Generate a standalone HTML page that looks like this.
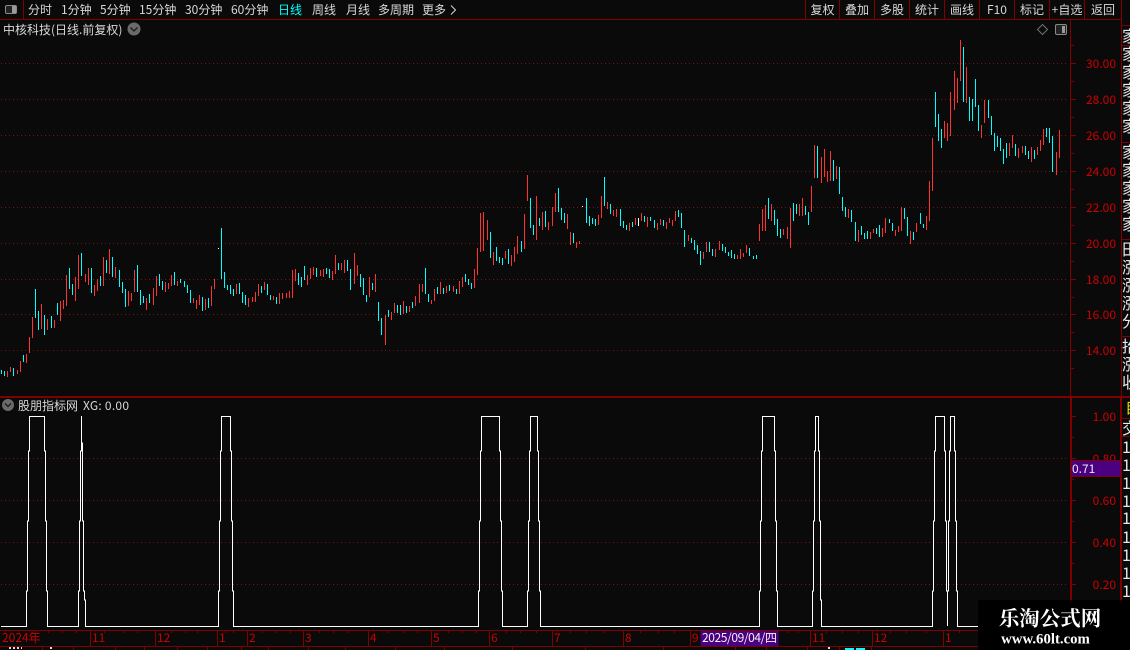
<!DOCTYPE html>
<html><head><meta charset="utf-8"><style>
html,body{margin:0;padding:0;background:#0a0a0a;width:1130px;height:650px;overflow:hidden}
svg{display:block;position:absolute;left:0;top:0}
text{font-family:"WenQuanYi Zen Hei","Noto Sans CJK SC",sans-serif;font-size:12px;fill:#d8d8d8}
.a{fill:#cc0000;text-anchor:end}
.t{fill:#cc0000}
.b{text-anchor:middle}
.s{fill:#e8e8e8;font-size:16px}
.w{font-family:"Liberation Serif","Noto Serif CJK SC",serif;font-weight:bold;fill:#fff}
</style></head><body>
<svg width="1130" height="650" viewBox="0 0 1130 650">
<rect width="1130" height="650" fill="#0a0a0a"/>
<!-- grids -->
<g stroke="#801010" stroke-width="1" stroke-dasharray="1 3" shape-rendering="crispEdges" fill="none">
<path d="M1 63.5H1069M1 99.5H1069M1 135.5H1069M1 171.5H1069M1 207.5H1069M1 243.5H1069M1 279.5H1069M1 314.5H1069M1 350.5H1069M1 458.5H1069M1 500.5H1069M1 542.5H1069M1 584.5H1069"/>
</g>
<!-- candles -->
<g fill="none" stroke-width="3" shape-rendering="crispEdges">
<g transform="translate(0,220) scale(.33333)">
<path stroke="#00ffff" d="M4 450V462M13 453V468M40 444V468M70 405V426M106 207V294M115 273V330M133 285V345M154 288V324M172 249V285M208 144V207M217 192V225M244 99V168M274 144V219M301 168V198M319 120V159M337 111V171M358 150V201M367 186V219M376 207V261M412 135V216M421 210V255M430 228V249M448 222V249M478 162V198M487 183V210M523 156V195M541 177V189M553 183V201M562 195V219M571 210V249M607 231V273M625 234V264M664 24V177M673 156V204M682 195V210M691 195V222M700 207V228M718 189V222"/>
<path stroke="#ff3232" d="M22 453V471M31 441V456M52 450V462M61 423V456M79 402V429M88 351V399M97 291V354M124 252V327M142 297V330M163 300V324M181 243V303M190 240V267M199 165V258M226 171V243M235 105V207M256 162V186M265 144V195M283 195V228M292 177V213M310 111V198M328 87V162M346 141V174M385 213V258M394 219V243M403 150V216M439 234V270M460 204V255M469 168V228M496 186V216M505 189V207M514 165V198M532 183V198M580 234V249M589 240V267M598 225V255M616 237V270M634 198V258M643 177V207M709 192V222"/>
<path stroke="#ffffff" d="M655 84V87"/>
</g>
<g transform="translate(240,200) scale(.33333)">
<path stroke="#00ffff" d="M7 276V309M16 285V315M64 258V279M82 252V285M91 285V300M109 291V312M175 219V255M184 231V261M193 198V240M229 204V231M259 204V222M268 207V234M295 189V210M322 180V213M331 207V270M361 222V261M370 234V285M379 285V306M397 249V270M415 306V363M424 354V405M445 330V351M472 315V339M481 315V345M499 318V339M517 306V324M556 204V282M565 282V306M592 261V282M610 264V282M628 255V273M649 267V282M676 222V246M685 237V255M694 249V267"/>
<path stroke="#ff3232" d="M25 294V321M37 291V306M46 276V306M55 252V288M73 246V270M100 288V300M118 279V312M127 279V297M139 279V294M148 273V294M157 210V294M166 207V243M202 225V255M211 204V237M220 201V225M241 210V228M250 207V231M277 213V240M286 165V222M304 189V210M313 180V219M343 159V252M352 195V228M388 231V291M406 222V276M436 345V435M454 336V360M463 309V339M490 303V342M508 318V336M526 288V318M538 252V309M547 252V276M574 300V312M583 267V303M601 246V282M619 258V279M640 258V276M658 243V282M667 231V261M703 207V264M712 144V225"/>
</g>
<g transform="translate(470,160) scale(.33333)">
<path stroke="#00ffff" d="M61 216V294M79 261V303M88 291V309M97 294V315M115 267V312M154 243V276M181 114V204M190 195V225M208 174V198M226 153V201M265 84V156M274 144V180M283 159V189M310 219V249M349 114V189M358 168V198M367 174V192M376 177V198M403 51V138M421 132V162M451 147V198M460 183V204M469 195V210M487 186V201M523 168V186M541 171V183M553 180V204M580 180V198M625 150V171M634 159V204M643 210V261M664 234V249M673 240V270M682 255V282M691 273V315M718 246V276M727 267V288M757 252V273M766 261V279M775 276V288M784 270V294M793 282V297M838 264V288M850 288V297M859 285V297"/>
<path stroke="#ff3232" d="M31 159V276M40 156V273M52 180V240M70 276V315M106 273V297M124 285V318M133 261V306M142 228V282M163 162V267M172 45V123M199 108V240M217 156V210M235 186V210M247 141V198M256 99V156M292 162V207M301 216V255M319 246V264M328 243V252M385 165V195M394 108V174M412 126V147M430 150V168M439 147V171M478 189V213M496 174V195M514 159V183M532 171V201M562 189V210M571 177V195M589 186V207M598 174V189M607 180V198M616 153V183M655 225V243M700 276V297M709 246V276M736 267V291M748 243V270M802 285V297M811 267V297M820 279V291M829 255V279M868 192V243M877 147V213"/>
<path stroke="#ffffff" d="M337 138V141M505 174V198"/>
</g>
<g transform="translate(760,30) scale(.33333)">
<path stroke="#00ffff" d="M25 504V567M43 540V585M52 567V618M61 597V624M100 519V573M109 522V552M136 528V555M145 546V585M172 348V444M220 390V453M238 411V492M247 501V543M256 531V561M274 540V576M286 576V633M304 588V615M313 609V627M322 603V627M349 594V612M358 585V621M388 567V579M397 579V603M433 534V567M442 561V618M460 606V630M481 549V582M490 582V594M526 186V291M535 252V333M544 297V354M610 51V216M628 201V273M637 207V273M646 147V231M655 225V303M685 210V264M694 258V315M703 309V363M712 318V351M721 324V363M730 357V402M739 339V384M766 342V378M796 348V375M805 363V387M823 360V387M859 294V321M868 294V339M877 318V426"/>
<path stroke="#ff3232" d="M7 537V603M16 525V603M34 522V573M70 597V615M82 591V627M91 534V654M118 522V558M127 504V558M154 468V546M163 345V444M184 381V459M193 357V441M202 423V456M211 363V453M229 408V447M265 537V564M295 600V636M331 606V627M340 597V609M367 594V621M376 564V609M406 600V618M415 588V606M424 531V603M451 603V642M469 579V606M499 558V600M508 453V573M517 324V483M553 273V324M562 279V333M571 186V318M583 123V240M592 144V219M601 30V153M619 111V219M664 285V324M673 210V279M748 339V378M757 315V354M775 354V384M787 348V369M814 351V396M832 351V375M841 330V363M850 297V345M889 366V435M898 300V384"/>
</g>
</g>
<!-- indicator line -->
<path fill="none" stroke="#fff" stroke-width="1" shape-rendering="crispEdges" d="M1 626.5H26.5V591H27.5V521H28.5V451H29.5V416.5H44.5V451H45.5V521H46.5V591H47.5V626.5H78.5V591H79.5V521H80.5V451H81.5V416V443H82.5V521H83.5V591H84.5V600H85.5V626.5H218.5V591H219.5V521H220.5V451H221.5V416.5H230.5V451H231.5V521H232.5V591H233.5V626.5H478.5V591H479.5V521H480.5V451H481.5V416.5H499.5V451H500.5V521H501.5V591H502.5V626.5H527.5V591H528.5V521H529.5V451H530.5V416.5H537.5V451H538.5V521H539.5V591H540.5V626.5H759.5V591H760.5V521H761.5V451H762.5V416.5H774.5V451H775.5V521H776.5V591H777.5V626.5H812.5V591H813.5V521H814.5V451H815.5V416.5H818.5V451H819.5V521H820.5V600H821.5V626.5H932.5V591H933.5V521H934.5V451H935.5V416.5H944.5V451H945.5V521H946.5V591H947.5V626V591H948.5V521H949.5V451H950.5V416.5H954.5V451H955.5V521H956.5V591H957.5V626.5H1000"/>
<!-- frame lines -->
<g stroke="#800000" stroke-width="1" fill="none" shape-rendering="crispEdges">
<path d="M0 19.5H1122M1122 25.5H1130M1122 45.5H1130M1122 142.5H1130M1122 239.5H1130M1122 336.5H1130M1122 418.5H1130M1122 436.5H1130"/>
<path d="M1070.5 20V630M1121.5 0V646M1071.5 398V630M1120.5 398V630"/>
<path d="M0 396.5H1130M0 397.5H1130"/>
<path d="M23.5 0V19M805.5 0V19M839.5 0V19M874.5 0V19M909.5 0V19M944.5 0V19M979.5 0V19M1014.5 0V19M1049.5 0V19M1084.5 0V19"/>
<!-- price ticks -->
<path d="M1071 63.5H1076M1071 99.5H1076M1071 135.5H1076M1071 171.5H1076M1071 207.5H1076M1071 243.5H1076M1071 279.5H1076M1071 314.5H1076M1071 350.5H1076M1071 45.5H1074M1071 81.5H1074M1071 117.5H1074M1071 153.5H1074M1071 189.5H1074M1071 225.5H1074M1071 261.5H1074M1071 297.5H1074M1071 332.5H1074M1071 368.5H1074"/>
<path d="M1071 416.5H1076M1071 458.5H1076M1071 500.5H1076M1071 542.5H1076M1071 584.5H1076M1071 437.5H1074M1071 479.5H1074M1071 521.5H1074M1071 563.5H1074M1071 605.5H1074"/>
<!-- time axis -->
<path d="M0 630.5H1122M0 646.5H1130"/>
<path d="M90.5 631V646M155.5 631V646M217.5 631V646M247.5 631V646M303.5 631V646M368.5 631V646M431.5 631V646M489.5 631V646M552.5 631V646M623.5 631V646M690.5 631V646M810.5 631V646M872.5 631V646M943.5 631V646"/>
<path d="M48.5 631V633M62.5 631V633M76.5 631V633M104.5 631V633M123.5 631V633M137.5 631V633M171.5 631V633M185.5 631V633M197.5 631V633M225.5 631V633M233.5 631V633M262.5 631V633M276.5 631V633M290.5 631V633M319.5 631V633M333.5 631V633M348.5 631V633M387.5 631V633M403.5 631V633M417.5 631V633M448.5 631V633M462.5 631V633M476.5 631V633M506.5 631V633M520.5 631V633M536.5 631V633M570.5 631V633M586.5 631V633M604.5 631V633M640.5 631V633M658.5 631V633M674.5 631V633M788.5 631V633M798.5 631V633M826.5 631V633M842.5 631V633M858.5 631V633M890.5 631V633M906.5 631V633M926.5 631V633M959.5 631V633"/>
<path d="M42.5 647V650M73.5 647V650M115.5 647V650M144.5 647V650M177.5 647V650M207.5 647V650M241.5 647V650M268.5 647V650M308.5 647V650M345.5 647V650M395.5 647V650M444.5 647V650M512.5 647V650M585.5 647V650M663.5 647V650M735.5 647V650M766.5 647V650M807.5 647V650M839.5 647V650M871.5 647V650"/>
</g>
<path d="M9 648H22M50 648H52M828 648H830" stroke="#ddd" stroke-width="2" stroke-dasharray="2 2" shape-rendering="crispEdges"/>
<path d="M845 649H866" stroke="#00ffff" stroke-width="2" stroke-dasharray="9 2" shape-rendering="crispEdges"/>
<!-- top left icon -->
<rect x="5.5" y="5.5" width="11" height="8" rx="1.5" fill="#222" stroke="#8a8a8a"/>
<rect x="12" y="6" width="4" height="7" fill="#9a9a9a"/>
<!-- toolbar text -->
<text x="28" y="14">分时</text>
<text x="61" y="14">1分钟</text>
<text x="100" y="14">5分钟</text>
<text x="139" y="14">15分钟</text>
<text x="185" y="14">30分钟</text>
<text x="231" y="14">60分钟</text>
<text x="278" y="14" style="fill:#00ffff">日线</text>
<text x="312" y="14">周线</text>
<text x="346" y="14">月线</text>
<text x="378" y="14">多周期</text>
<text x="422" y="14">更多</text>
<path d="M451 5.5L455.5 10L451 14.5" fill="none" stroke="#d8d8d8"/>
<text class="b" x="822.5" y="14">复权</text>
<text class="b" x="857" y="14">叠加</text>
<text class="b" x="892" y="14">多股</text>
<text class="b" x="927" y="14">统计</text>
<text class="b" x="962" y="14">画线</text>
<text class="b" x="997" y="14">F10</text>
<text class="b" x="1032" y="14">标记</text>
<text class="b" x="1067" y="14">+自选</text>
<text class="b" x="1103" y="14">返回</text>
<!-- chart title -->
<text x="3" y="34">中核科技(日线.前复权)</text>
<circle cx="134" cy="29" r="6.5" fill="#6a6a6a"/>
<path d="M130.5 27.5L134 31L137.5 27.5" fill="none" stroke="#1a1a1a" stroke-width="1.3"/>
<path d="M1042.5 24.5L1047.5 29.5L1042.5 34.5L1037.5 29.5Z" fill="none" stroke="#707070"/>
<rect x="1055.5" y="24.5" width="11" height="10" rx="1.5" fill="#222" stroke="#8a8a8a"/>
<rect x="1062" y="26" width="3" height="7" fill="#9a9a9a"/>
<!-- price axis -->
<text class="a" x="1116" y="68">30.00</text>
<text class="a" x="1116" y="104">28.00</text>
<text class="a" x="1116" y="140">26.00</text>
<text class="a" x="1116" y="176">24.00</text>
<text class="a" x="1116" y="212">22.00</text>
<text class="a" x="1116" y="248">20.00</text>
<text class="a" x="1116" y="284">18.00</text>
<text class="a" x="1116" y="319">16.00</text>
<text class="a" x="1116" y="355">14.00</text>
<!-- indicator -->
<circle cx="8" cy="405" r="6" fill="#6a6a6a"/>
<path d="M5 403.5L8 406.5L11 403.5" fill="none" stroke="#1a1a1a" stroke-width="1.3"/>
<text x="18" y="410">股朋指标网</text>
<text x="83" y="410" textLength="46">XG: 0.00</text>
<text class="a" x="1116" y="421">1.00</text>
<text class="a" x="1116" y="463">0.80</text>
<text class="a" x="1116" y="505">0.60</text>
<text class="a" x="1116" y="547">0.40</text>
<text class="a" x="1116" y="589">0.20</text>
<rect x="1071" y="460.5" width="50" height="16" fill="#4b0082" stroke="#800000" shape-rendering="crispEdges"/>
<rect x="1072" y="461" width="48" height="15" fill="#4b0082"/>
<text x="1072" y="473" style="fill:#e8e8e8">0.71</text>
<!-- time labels -->
<text class="t" x="2" y="642">2024年</text>
<text class="t" x="92" y="642">11</text>
<text class="t" x="157" y="642">12</text>
<text class="t" x="219" y="642">1</text>
<text class="t" x="249" y="642">2</text>
<text class="t" x="305" y="642">3</text>
<text class="t" x="370" y="642">4</text>
<text class="t" x="433" y="642">5</text>
<text class="t" x="491" y="642">6</text>
<text class="t" x="554" y="642">7</text>
<text class="t" x="625" y="642">8</text>
<text class="t" x="692" y="642">9</text>
<rect x="700.5" y="631" width="78" height="15" fill="#4b0082"/>
<text x="702" y="642" style="fill:#f0f0f0" textLength="75">2025/09/04/四</text>
<text class="t" x="812" y="642">11</text>
<text class="t" x="874" y="642">12</text>
<text class="t" x="945" y="642">1</text>
<!-- sidebar -->
<svg x="1122" y="0" width="8" height="650" viewBox="1122 0 8 650">
<g>
<text class="s" x="1122" y="42">家</text>
<text class="s" x="1122" y="60">家</text>
<text class="s" x="1122" y="78">家</text>
<text class="s" x="1122" y="96">家</text>
<text class="s" x="1122" y="114">家</text>
<text class="s" x="1122" y="132">家</text>
<text class="s" x="1122" y="158">家</text>
<text class="s" x="1122" y="176">家</text>
<text class="s" x="1122" y="194">家</text>
<text class="s" x="1122" y="212">家</text>
<text class="s" x="1122" y="230">家</text>
<text class="s" x="1122" y="255">田</text>
<text class="s" x="1122" y="273">涨</text>
<text class="s" x="1122" y="291">涨</text>
<text class="s" x="1122" y="309">涨</text>
<text class="s" x="1122" y="327">分</text>
<text class="s" x="1122" y="352">抬</text>
<text class="s" x="1122" y="370">涨</text>
<text class="s" x="1122" y="388">收</text>
<text x="1125" y="413" style="fill:#d8d800;font-size:16px">自</text>
<text class="s" x="1122" y="434">交</text>
<text class="s" x="1122" y="453">1</text>
<text class="s" x="1122" y="471">1</text>
<text class="s" x="1122" y="489">1</text>
<text class="s" x="1122" y="507">1</text>
<text class="s" x="1122" y="524">1</text>
<text class="s" x="1122" y="543">1</text>
<text class="s" x="1122" y="561">1</text>
<text class="s" x="1122" y="579">1</text>
<text class="s" x="1122" y="597">1</text>
</g>
</svg>
<!-- watermark -->
<rect x="978" y="600" width="152" height="50" fill="#000"/>
<text class="w" x="1050" y="625.5" text-anchor="middle" style="font-size:20.5px">乐淘公式网</text>
<text class="w" x="1045.5" y="643.5" text-anchor="middle" style="font-size:14.8px">www.60lt.com</text>
</svg>
</body></html>
